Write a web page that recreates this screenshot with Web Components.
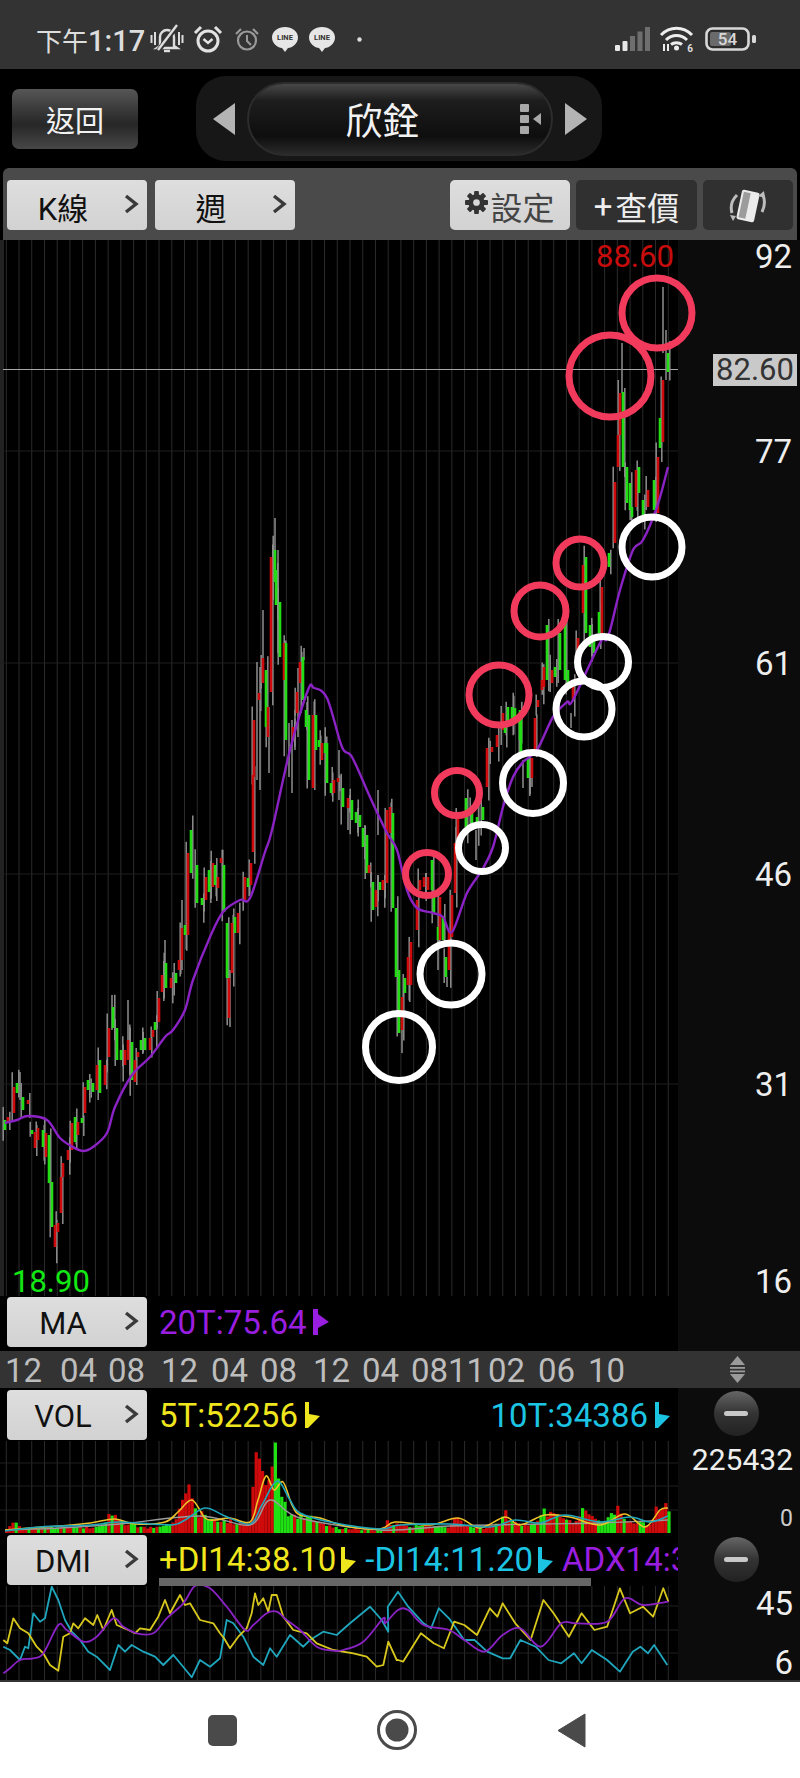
<!DOCTYPE html>
<html lang="zh-Hant">
<head>
<meta charset="utf-8">
<title>欣銓</title>
<style>
  html, body { margin: 0; background: #000; }
  body { width: 800px; height: 1778px; overflow: hidden; font-family: Roboto, "Noto Sans CJK TC", sans-serif; }
</style>
</head>
<body>
<phone-status></phone-status>
<stock-header name="欣銓"></stock-header>
<chart-toolbar></chart-toolbar>
<kline-chart></kline-chart>
<ma-row></ma-row>
<date-axis></date-axis>
<vol-panel></vol-panel>
<dmi-panel></dmi-panel>
<phone-nav></phone-nav>

<script>
// Helpers for chart drawing
const FONT = 'Roboto, "Noto Sans CJK TC", sans-serif';
const GRID_STEP = 12.73;
const GRID_START = 6.3;

// Small seeded random, so the picture is the same every time
function makeRandom(seed) {
  let s = seed;
  return () => {
    s = (s * 16807) % 2147483647;
    return (s % 1000) / 1000;
  };
}

// Parse "x,y x,y" traced from a zoom crop into page coordinates
function traced(str, ox, oy, sx, sy) {
  return str.trim().split(/\s+/).map(p => {
    const [x, y] = p.split(",").map(Number);
    return [ox + x / sx, oy + y / sy];
  });
}

// Catmull-Rom curve through the points, for the soft MA and volume lines
function linePath(points) {
  let d = `M${points[0][0].toFixed(1)} ${points[0][1].toFixed(1)}`;
  for (let i = 0; i < points.length - 1; i++) {
    const p0 = points[i - 1] || points[i];
    const p1 = points[i];
    const p2 = points[i + 1];
    const p3 = points[i + 2] || p2;
    const c1x = p1[0] + (p2[0] - p0[0]) / 6, c1y = p1[1] + (p2[1] - p0[1]) / 6;
    const c2x = p2[0] - (p3[0] - p1[0]) / 6, c2y = p2[1] - (p3[1] - p1[1]) / 6;
    d += `C${c1x.toFixed(1)} ${c1y.toFixed(1)} ${c2x.toFixed(1)} ${c2y.toFixed(1)} ${p2[0].toFixed(1)} ${p2[1].toFixed(1)}`;
  }
  return d;
}

// Straight segments, the DMI lines are jagged
function jaggedPath(points) {
  return points.map((p, i) => (i ? "L" : "M") + p[0].toFixed(1) + " " + p[1].toFixed(1)).join("");
}

function gridLines(x2, y1, y2, rows) {
  let out = "";
  for (let x = GRID_START; x < x2; x += GRID_STEP) {
    out += `<line x1="${x}" x2="${x}" y1="${y1}" y2="${y2}" stroke="#2b2b2b"/>`;
  }
  rows.forEach(y => {
    out += `<line x1="0" x2="${x2}" y1="${y}" y2="${y}" stroke="#1e1e1e"/>`;
  });
  return out;
}

// Candle bodies: x top bottom colour
const BODIES = `5 1120 1130 g|8 1117 1123 r|14 1087 1113 r|17 1083 1093 g|23 1097 1110 g|28 1100 1104 r|32 1130 1134 g|35 1132 1148 r|38 1128 1140 r|43 1130 1147 g|46 1133 1157 r|49 1135 1183 g|52 1182 1227 g|55 1225 1247 r|58 1223 1232 r|61 1177 1213 r|63 1163 1177 r|68 1150 1160 r|72 1123 1150 r|75 1117 1142 g|78 1122 1135 r|82 1118 1123 g|85 1087 1113 r|88 1080 1090 g|93 1083 1092 g|97 1065 1090 r|100 1060 1093 g|105 1065 1085 r|109 1028 1057 r|113 1007 1028 g|117 1028 1060 g|121 1050 1060 g|125 1050 1065 r|128 1040 1060 r|132 1042 1080 g|135 1060 1082 r|138 1052 1057 r|141 1040 1050 g|145 1038 1050 g|150 1038 1050 r|153 1030 1037 r|155 1022 1030 g|159 998 1022 r|162 975 992 r|166 963 988 g|171 978 988 r|176 973 983 g|179 960 970 r|182 928 960 r|185 925 935 g|188 853 935 r|191 830 873 g|197 865 903 g|202 898 905 g|206 877 900 r|209 870 892 g|213 863 887 r|215 865 885 g|218 877 888 r|221 858 863 r|224 865 912 g|227 923 978 g|229 978 1018 r|232 923 973 r|235 917 933 g|238 913 933 r|245 877 900 r|248 878 887 g|251 863 885 r|253 775 852 r|254 720 777 r|259 693 700 r|263 658 683 r|266 670 727 g|268 707 737 r|271 557 692 r|275 550 582 g|276 570 605 g|280 602 657 g|284 643 680 r|286 643 740 g|293 727 740 r|297 692 713 r|300 662 683 r|303 657 700 g|306 710 727 g|309 715 780 g|313 715 788 r|316 715 750 g|319 740 747 g|322 743 760 r|325 743 753 g|327 743 783 g|331 783 793 g|334 780 793 r|338 778 782 r|343 788 807 g|348 798 808 r|352 800 820 g|356 812 823 g|360 815 827 g|363 828 847 g|367 835 873 g|369 865 873 r|373 882 910 g|376 890 907 r|380 882 890 g|383 880 890 r|387 810 883 r|390 807 833 r|393 813 908 g|396 908 977 g|399 970 1033 g|402 997 1030 r|405 978 993 g|408 957 985 r|411 942 985 r|417 900 930 r|420 880 890 r|424 877 887 r|428 877 890 r|432 860 890 g|434 897 913 g|438 927 940 g|440 897 940 r|443 917 940 g|446 957 977 g|449 930 970 r|452 895 937 r|455 843 893 r|458 818 840 r|466 798 827 g|472 813 823 g|477 817 828 g|483 807 820 g|487 748 787 r|492 747 752 r|497 735 747 r|503 713 730 r|505 723 733 g|508 707 723 g|512 707 720 g|515 708 720 g|520 710 740 g|521 717 753 g|528 758 778 g|532 758 778 r|535 718 750 r|538 700 707 r|542 680 690 r|544 667 687 r|547 625 680 g|552 670 683 r|555 667 677 g|560 633 670 g|565 617 680 g|568 670 687 g|573 687 700 r|578 638 653 r|583 565 613 r|586 557 633 g|590 625 647 g|594 637 653 g|599 612 633 g|602 587 633 r|609 553 567 g|615 482 543 r|618 435 467 r|620 393 435 r|623 392 467 g|627 467 503 g|630 483 510 g|632 507 517 g|636 470 507 r|639 467 493 g|643 500 517 g|648 490 507 r|654 480 510 g|658 457 513 r|660 418 448 g|663 380 442 r|668 353 372 g`;

// Long wicks that stand out: x top bottom
const WICKS = `622 343 393|663 287 353|666 330 380|275 518 550|263 610 670|260 667 790|257 662 780|269 707 773|278 550 653|289 723 777|292 720 793|295 710 750|298 668 737|304 648 660|307 702 730|402 1030 1053|447 977 987|438 927 970|456 827 893|476 830 860|523 760 788|532 760 787|571 713 728|230 970 1027|339 750 800|165 940 985|128 1000 1050|112 995 1030|20 1072 1100|348 808 830|378 790 835|182 900 970`;

const MA_LINE = traced(`5,1123 17,1120 28,1116 47,1120 60,1138 73,1147 83,1151 93,1147 107,1133 115,1107 132,1075 150,1057 165,1037 173,1030 185,1010 193,980 210,937 223,912 240,900 250,898 265,852 272,830 290,750 308,690 314,688 327,698 342,747 352,757 370,797 387,833 397,850 407,890 417,908 433,913 443,917 452,932 467,893 482,870 493,847 503,807 513,777 523,762 537,750 553,717 567,702 573,700 600,643 608,637 620,590 633,550 643,540 657,507 668,467`, 0, 0, 1, 1);

// ----- Small arrow flag that follows each indicator value -----
class TrendFlag extends HTMLElement {
  connectedCallback() {
    const color = this.getAttribute("color");
    const up = this.hasAttribute("up");
    const shape = up
      ? "M0 0 L5 0 L5 5 L16 13 L5 19 L5 26 L0 26Z"
      : "M0 0 L4 0 L4 12 L15 14 L3 26 L0 26Z";
    this.attachShadow({ mode: "open" });
    this.shadowRoot.innerHTML = `
      <style>
        :host { display: inline-block; width: 16px; height: 26px; flex: none; }
        svg { display: block; }
      </style>
      <svg width="16" height="26" viewBox="0 0 16 26"><path d="${shape}" fill="${color}"/></svg>
    `;
  }
}
customElements.define("trend-flag", TrendFlag);

// ----- Light grey button with chevron -----
class MenuButton extends HTMLElement {
  constructor() {
    super();
    this.attachShadow({ mode: "open" });
    this.shadowRoot.innerHTML = `
      <style>
        :host {
          display: flex;
          position: relative;
          align-items: center;
          justify-content: center;
          box-sizing: border-box;
          width: 140px;
          height: 50px;
          padding: 3px 28px 0 0;
          border-radius: 4px;
          background: linear-gradient(#dedede, #d2d2d2);
          color: #111;
          font: 400 31px ${FONT};
          flex: none;
        }
        svg { position: absolute; right: 8px; top: 14px; }
      </style>
      <slot></slot>
      <svg width="15" height="20" viewBox="0 0 15 20"><path d="M2 2 L12 10 L2 18" fill="none" stroke="#3a3a3a" stroke-width="3.4"/></svg>
    `;
  }
}
customElements.define("menu-button", MenuButton);

// ----- Round minus button on the right axis -----
class ZoomMinus extends HTMLElement {
  constructor() {
    super();
    this.attachShadow({ mode: "open" });
    this.shadowRoot.innerHTML = `
      <style>
        :host {
          display: flex;
          align-items: center;
          justify-content: center;
          width: 45px;
          height: 45px;
          margin-right: 6px;
          border-radius: 50%;
          background: linear-gradient(#666, #333 50%, #222);
          flex: none;
        }
        i { width: 24px; height: 5px; border-radius: 3px; background: #c8c8c8; }
      </style>
      <i></i>
    `;
  }
}
customElements.define("zoom-minus", ZoomMinus);

// ----- Android status bar -----
class PhoneStatus extends HTMLElement {
  constructor() {
    super();
    this.attachShadow({ mode: "open" });
    this.shadowRoot.innerHTML = `
      <style>
        :host {
          display: flex;
          align-items: center;
          justify-content: space-between;
          box-sizing: border-box;
          height: 69px;
          padding: 9px 44px 0 36px;
          background: #333;
          color: #ddd;
          font-family: ${FONT};
        }
        .side { display: flex; align-items: center; }
        .time { font-size: 26px; width: 107px; white-space: nowrap; }
        .time b { font-size: 29px; font-weight: 500; }
        svg { display: block; flex: none; }
      </style>
      <div class="side">
        <span class="time">下午<b>1:17</b></span>
        <svg width="34" height="30" viewBox="0 0 34 30" style="margin-left:7px" fill="none" stroke="#ddd">
          <path d="M10 22V13a7 7 0 0 1 14 0v9l3 2H7z" stroke-width="2.4"/>
          <path d="M14 27h6" stroke-width="2.4"/>
          <path d="M1.5 11v8M5 8v13M29 8v13M32.5 11v8" stroke-width="2"/>
          <path d="M8 27L27 2" stroke="#333" stroke-width="5"/>
          <path d="M8 26L27 1" stroke-width="2.4"/>
        </svg>
        <svg width="30" height="28" viewBox="0 0 30 28" style="margin-left:9px" fill="none" stroke="#e2e2e2">
          <circle cx="15" cy="16" r="10" stroke-width="3"/>
          <path d="M10.5 14l4.5 4 4.5-4" stroke-width="2.4"/>
          <path d="M2 8l6-6M28 8l-6-6" stroke-width="3"/>
        </svg>
        <svg width="26" height="24" viewBox="0 0 26 24" style="margin-left:11px" fill="none" stroke="#9a9a9a">
          <circle cx="13" cy="13.5" r="9" stroke-width="2.2"/>
          <path d="M13 8v6l4 4" stroke-width="2"/>
          <path d="M2 7l5-5M24 7l-5-5" stroke-width="2.2"/>
        </svg>
        <svg width="26" height="25" viewBox="0 0 26 25" style="margin-left:12px">
          <path d="M13 0C20 0 26 4.5 26 10.5S20 21 16 21L13 25 10 21C6 21 0 16.5 0 10.5S6 0 13 0Z" fill="#e6e6e6"/>
          <text x="13" y="13" font-size="7.5" font-weight="700" font-family="Roboto" text-anchor="middle" fill="#333">LINE</text>
        </svg>
        <svg width="26" height="25" viewBox="0 0 26 25" style="margin-left:11px">
          <path d="M13 0C20 0 26 4.5 26 10.5S20 21 16 21L13 25 10 21C6 21 0 16.5 0 10.5S6 0 13 0Z" fill="#e6e6e6"/>
          <text x="13" y="13" font-size="7.5" font-weight="700" font-family="Roboto" text-anchor="middle" fill="#333">LINE</text>
        </svg>
        <svg width="5" height="5" viewBox="0 0 5 5" style="margin-left:22px"><circle cx="2.5" cy="2.5" r="2.2" fill="#ddd"/></svg>
      </div>
      <div class="side">
        <svg width="35" height="24" viewBox="0 0 35 24">
          <rect x="0" y="18" width="5" height="6" rx="1" fill="#e8e8e8"/>
          <rect x="7.5" y="14" width="5" height="10" rx="1" fill="#e8e8e8"/>
          <rect x="15" y="9" width="5" height="15" fill="#6e6e6e"/>
          <rect x="22.5" y="4.5" width="5" height="19.5" fill="#6e6e6e"/>
          <rect x="30" y="0" width="5" height="24" fill="#6e6e6e"/>
        </svg>
        <svg width="35" height="26" viewBox="0 0 35 26" style="margin-left:9px" fill="none" stroke="#eee" stroke-width="3">
          <path d="M2 9C11 0 24 0 33 9"/>
          <path d="M7 14C13 8 22 8 28 14"/>
          <path d="M12 18.5C15 16 20 16 23 18.5"/>
          <circle cx="17.5" cy="22" r="2.5" fill="#eee" stroke="none"/>
          <path d="M5 18v7M9 18v7" stroke-width="2"/>
          <text x="31" y="25.5" font-size="10" font-family="Roboto" font-weight="700" fill="#ddd" stroke="none" text-anchor="middle">6</text>
        </svg>
        <svg width="51" height="24" viewBox="0 0 51 24" style="margin-left:11px">
          <rect x="1.5" y="1.5" width="42" height="21" rx="6" fill="#2b2b2b" stroke="#d8d8d8" stroke-width="2.6"/>
          <rect x="5" y="5" width="21" height="14" rx="2" fill="#6a6a6a"/>
          <rect x="47" y="8" width="4" height="8" rx="1.5" fill="#d8d8d8"/>
          <text x="22.5" y="18" font-size="17" font-family="Roboto" font-weight="500" fill="#d8d8d8" text-anchor="middle">54</text>
        </svg>
      </div>
    `;
  }
}
customElements.define("phone-status", PhoneStatus);

// ----- Back button and stock stepper -----
class StockHeader extends HTMLElement {
  connectedCallback() {
    const name = this.getAttribute("name");
    this.attachShadow({ mode: "open" });
    this.shadowRoot.innerHTML = `
      <style>
        :host {
          display: flex;
          align-items: center;
          box-sizing: border-box;
          height: 99px;
          padding-left: 12px;
          background: #000;
          font-family: ${FONT};
          color: #f2f2f2;
        }
        .back {
          display: flex;
          align-items: center;
          justify-content: center;
          width: 126px;
          height: 60px;
          border-radius: 7px;
          background: linear-gradient(#565656, #2d2d2d 50%, #272727 60%, #474747);
          font-size: 29px;
        }
        .stepper {
          display: flex;
          align-items: center;
          box-sizing: border-box;
          width: 406px;
          height: 85px;
          margin-left: 58px;
          padding: 0 17px;
          gap: 12px;
          border-radius: 30px;
          background: #171717;
        }
        .pill {
          display: flex;
          align-items: center;
          box-sizing: border-box;
          width: 306px;
          height: 74px;
          border-radius: 37px;
          border: 2px solid #2c2c2c;
          background: linear-gradient(#484848, #1d1d1d 24%, #0e0e0e 75%, #2a2a2a);
          flex: none;
        }
        .name { width: 267px; text-align: center; font-size: 37px; }
        svg { display: block; flex: none; }
      </style>
      <div class="back">返回</div>
      <div class="stepper">
        <svg width="22" height="32" viewBox="0 0 22 32"><path d="M22 0V32L0 16Z" fill="#b4b4b4"/></svg>
        <div class="pill">
          <span class="name">${name}</span>
          <svg width="22" height="30" viewBox="0 0 22 30" style="margin-left:4px" fill="#a8a8a8">
            <rect x="0" y="0" width="9" height="8" rx="1"/>
            <rect x="0" y="11" width="9" height="8" rx="1"/>
            <rect x="0" y="22" width="9" height="8" rx="1"/>
            <path d="M21 9V21L13 15Z"/>
          </svg>
        </div>
        <svg width="22" height="32" viewBox="0 0 22 32"><path d="M0 0V32L22 16Z" fill="#b4b4b4"/></svg>
      </div>
    `;
  }
}
customElements.define("stock-header", StockHeader);

// ----- Grey toolbar with period and action buttons -----
class ChartToolbar extends HTMLElement {
  constructor() {
    super();
    this.attachShadow({ mode: "open" });
    this.shadowRoot.innerHTML = `
      <style>
        :host {
          display: flex;
          align-items: center;
          box-sizing: border-box;
          height: 72px;
          margin: 0 3px;
          padding: 2px 4px 0;
          gap: 6px;
          border-radius: 6px 6px 0 0;
          background: #4a4a4a;
          font-family: ${FONT};
        }
        menu-button + menu-button { margin-left: 2px; }
        .spacer { flex: 1; }
        .action {
          display: flex;
          align-items: center;
          justify-content: center;
          height: 50px;
          padding-top: 2px;
          box-sizing: border-box;
          border-radius: 5px;
          font-size: 32px;
          flex: none;
        }
        .light { width: 120px; background: linear-gradient(#dedede, #d2d2d2); color: #444; }
        .dark { width: 121px; background: #303030; color: #eee; }
        .turn { width: 90px; background: #303030; }
        .plus { font-size: 33px; margin-right: 3px; }
      </style>
      <menu-button>K線</menu-button>
      <menu-button>週</menu-button>
      <div class="spacer"></div>
      <div class="action light">
        <svg width="23" height="23" viewBox="0 0 24 24" style="margin-right:2px;margin-top:-8px">
          <g fill="#333">
            <rect x="9.5" y="0" width="5" height="24" rx="1"/>
            <rect x="9.5" y="0" width="5" height="24" rx="1" transform="rotate(45 12 12)"/>
            <rect x="9.5" y="0" width="5" height="24" rx="1" transform="rotate(90 12 12)"/>
            <rect x="9.5" y="0" width="5" height="24" rx="1" transform="rotate(135 12 12)"/>
            <circle cx="12" cy="12" r="8.5"/>
          </g>
          <circle cx="12" cy="12" r="3.5" fill="#d8d8d8"/>
        </svg>設定
      </div>
      <div class="action dark"><span class="plus">+</span>查價</div>
      <div class="action turn">
        <svg width="38" height="34" viewBox="0 0 38 34">
          <rect x="10" y="2" width="18" height="30" rx="2" fill="#ececec" transform="rotate(12 19 17)"/>
          <rect x="12" y="4" width="7" height="26" fill="#9c9c9c" transform="rotate(12 19 17)"/>
          <path d="M3 24C1 17 3 11 8 6" fill="none" stroke="#bdbdbd" stroke-width="3"/>
          <path d="M1 26l6 1-3 5z" fill="#bdbdbd"/>
          <path d="M34 6c2 5 2 11-1 17" fill="none" stroke="#bdbdbd" stroke-width="3"/>
          <path d="M29 7l6-5 1 7z" fill="#bdbdbd"/>
        </svg>
      </div>
    `;
  }
}
customElements.define("chart-toolbar", ChartToolbar);

// ----- Main candlestick chart with price axis and marker circles -----
class KlineChart extends HTMLElement {
  constructor() {
    super();
    this.attachShadow({ mode: "open" });

    const rand = makeRandom(4711);
    let wicks = "";
    let bodies = "";
    BODIES.split("|").forEach((row, i) => {
      const parts = row.split(" ");
      const x = +parts[0], top = +parts[1], bottom = +parts[2];
      const up = 2 + rand() * 14;
      const down = 2 + rand() * 16;
      const wx = x + (i % 2 ? 1.8 : -1.8);
      wicks += `<line x1="${wx}" x2="${wx}" y1="${top - up}" y2="${bottom + down}"/>`;
      const fill = parts[3] === "r" ? "#cf0a0a" : "#22dc14";
      bodies += `<rect x="${x - 1.3}" y="${top}" width="2.6" height="${bottom - top}" fill="${fill}"/>`;
    });
    WICKS.split("|").forEach(row => {
      const [x, top, bottom] = row.split(" ").map(Number);
      wicks += `<line x1="${x}" x2="${x}" y1="${top}" y2="${bottom}"/>`;
    });

    const rings = [
      [657, 313, 35, "r"], [610, 376, 41, "r"], [580, 563, 24, "r"], [540, 611, 26, "r"],
      [499, 695, 30, "r"], [457, 793, 22.5, "r"], [427, 874, 21.5, "r"],
      [652, 547, 30, "w"], [603, 662, 25.5, "w"], [584, 709, 28, "w"], [533, 783, 30.5, "w"],
      [482, 848, 23.5, "w"], [451, 974, 31, "w"], [399, 1047, 33.5, "w"]
    ].map(([cx, cy, r, c]) =>
      `<circle cx="${cx}" cy="${cy}" r="${r}" fill="none" stroke="${c === "r" ? "#f23a5c" : "#fff"}" stroke-width="7"/>`
    ).join("");

    const ticks = [["92", 256], ["77", 451], ["61", 663], ["46", 874], ["31", 1084], ["16", 1281]]
      .map(([t, y]) => `<span class="tick" style="top:${y - 240}px">${t}</span>`).join("");

    this.shadowRoot.innerHTML = `
      <style>
        :host {
          display: block;
          position: relative;
          height: 1056px;
          background: #0c0c0c;
          font-family: ${FONT};
        }
        .plot { display: block; position: absolute; left: 0; top: 0; filter: blur(0.35px); }
        .tick {
          position: absolute;
          right: 8px;
          transform: translateY(-50%);
          color: #eee;
          font-size: 33px;
          line-height: 1;
        }
        .high { position: absolute; left: 596px; top: 0; color: #c80c0c; font-size: 31px; line-height: 34px; }
        .low { position: absolute; left: 12px; top: 1025px; color: #14e814; font-size: 31px; line-height: 34px; }
        .last {
          position: absolute;
          left: 713px;
          top: 114px;
          width: 84px;
          height: 32px;
          background: #c9c9c9;
          color: #333;
          font-size: 31px;
          line-height: 32px;
          text-align: center;
        }
        .rings { position: absolute; left: 0; top: 0; }
      </style>
      <svg class="plot" width="678" height="1056" viewBox="0 240 678 1056">
        <rect x="0" y="240" width="678" height="1056" fill="#000"/>
        <rect x="0" y="240" width="4" height="1056" fill="#222"/>
        ${gridLines(678, 240, 1296, [451, 663, 874, 1084])}
        <line x1="3" x2="678" y1="369.5" y2="369.5" stroke="#a8a8a8"/>
        <g stroke="#8f8f8f" stroke-width="1.5">${wicks}</g>
        ${bodies}
        <path d="${linePath(MA_LINE)}" fill="none" stroke="#8a22c4" stroke-width="2.4"/>
      </svg>
      ${ticks}
      <span class="high">88.60</span>
      <span class="low">18.90</span>
      <span class="last">82.60</span>
      <svg class="rings" width="800" height="1056" viewBox="0 240 800 1056">${rings}</svg>
    `;
  }
}
customElements.define("kline-chart", KlineChart);

// ----- Moving average row -----
class MaRow extends HTMLElement {
  constructor() {
    super();
    this.attachShadow({ mode: "open" });
    this.shadowRoot.innerHTML = `
      <style>
        :host {
          display: flex;
          align-items: center;
          box-sizing: border-box;
          height: 55px;
          padding: 0 122px 3px 7px;
          background: linear-gradient(to right, #000 678px, #0c0c0c 678px);
          font-family: ${FONT};
        }
        .value { margin-left: 12px; color: #9a1ee0; font-size: 33px; white-space: nowrap; }
        trend-flag { margin-left: 6px; }
      </style>
      <menu-button>MA</menu-button>
      <span class="value">20T:75.64</span>
      <trend-flag color="#9a1ee0" up></trend-flag>
    `;
  }
}
customElements.define("ma-row", MaRow);

// ----- Date axis between the price chart and the indicators -----
class DateAxis extends HTMLElement {
  constructor() {
    super();
    this.attachShadow({ mode: "open" });
    const labels = [["12", 5], ["04", 60], ["08", 108], ["12", 161], ["04", 211], ["08", 260], ["12", 313],
      ["04", 362], ["08", 411], ["11", 448], ["02", 488], ["06", 538], ["10", 588]]
      .map(([t, x]) => `<span style="left:${x}px">${t}</span>`).join("");
    this.shadowRoot.innerHTML = `
      <style>
        :host {
          display: block;
          position: relative;
          height: 37px;
          background: #333;
          font-family: ${FONT};
        }
        span { position: absolute; top: 1px; color: #bdbdbd; font-size: 33px; line-height: 37px; }
        svg { position: absolute; left: 729px; top: 5px; }
      </style>
      ${labels}
      <svg width="17" height="27" viewBox="0 0 17 27" fill="#9a9a9a">
        <path d="M8.5 0L16 9H1Z"/>
        <rect x="1" y="11" width="15" height="1.8"/>
        <rect x="1" y="14.5" width="15" height="1.8"/>
        <path d="M8.5 27L16 18H1Z"/>
      </svg>
    `;
  }
}
customElements.define("date-axis", DateAxis);

// ----- Volume panel -----
class VolPanel extends HTMLElement {
  constructor() {
    super();
    this.attachShadow({ mode: "open" });

    // Height of the bars along the panel, traced from the reference
    const shape = [[5, 4], [13, 12], [20, 5], [60, 7], [100, 7], [108, 20], [114, 18], [120, 12], [150, 6], [165, 9], [175, 14], [178, 25], [182, 36], [188, 50], [193, 25], [200, 22], [210, 14], [230, 14], [245, 10], [250, 13], [253, 84], [258, 74], [262, 58], [270, 62], [274, 92], [278, 42], [284, 30], [290, 18], [300, 20], [310, 17], [320, 10], [335, 6], [380, 3], [386, 13], [400, 8], [449, 8], [454, 17], [465, 8], [480, 5], [500, 12], [503, 25], [510, 12], [530, 8], [543, 25], [561, 15], [575, 12], [582, 27], [600, 10], [617, 28], [625, 12], [638, 12], [650, 8], [656, 32], [663, 33], [668, 20]];
    const heightAt = x => {
      for (let i = 1; i < shape.length; i++) {
        if (x <= shape[i][0]) {
          const [x0, h0] = shape[i - 1];
          const [x1, h1] = shape[i];
          return h0 + (h1 - h0) * (x - x0) / (x1 - x0);
        }
      }
      return 4;
    };
    const rand = makeRandom(2024);
    let bars = "";
    for (let x = 5; x < 669; x += 3.2) {
      const spike = shape.some(s => Math.abs(s[0] - x) < 1.7);
      const h = heightAt(x) * (spike ? 1 : 0.65 + rand() * 0.35);
      let green = rand() > 0.62;
      if (x > 174 && x < 191) green = false;
      if (x > 248 && x < 271) green = false;
      if (x > 271 && x < 277) green = true;
      bars += `<rect x="${x.toFixed(1)}" y="${(1533 - h).toFixed(1)}" width="3.2" height="${h.toFixed(1)}" fill="${green ? "#1fe012" : "#cf0a0a"}"/>`;
    }

    const yellow = traced(`5,1530 30,1528 60,1526 90,1523 115,1519 135,1524 165,1522 178,1512 192,1500 205,1518 215,1520 230,1518 250,1522 258,1500 266,1476 274,1490 283,1482 292,1505 300,1515 320,1518 345,1526 380,1529 395,1522 430,1525 458,1518 480,1528 505,1517 520,1525 545,1515 570,1517 600,1525 625,1514 645,1527 660,1510 668,1508`, 0, 0, 1, 1);
    const teal = traced(`5,1531 40,1527 90,1525 120,1522 170,1525 185,1520 205,1508 225,1516 250,1524 262,1505 277,1481 290,1500 300,1513 330,1522 380,1529 400,1525 450,1524 490,1527 515,1520 540,1523 565,1515 600,1522 630,1517 650,1522 668,1516`, 0, 0, 1, 1);
    const grey = traced(`5,1530 60,1528 120,1524 200,1516 250,1525 270,1500 300,1518 380,1530 450,1526 540,1524 600,1523 668,1520`, 0, 0, 1, 1);

    this.shadowRoot.innerHTML = `
      <style>
        :host {
          display: grid;
          grid-template-columns: 678px 122px;
          height: 145px;
          background: #000;
          font-family: ${FONT};
        }
        .main { display: flex; flex-direction: column; }
        .row { display: flex; align-items: center; height: 53px; padding-left: 7px; box-sizing: border-box; padding-top: 1px; flex: none; }
        .a { margin-left: 12px; color: #f0e61e; font-size: 33px; }
        .b { margin-left: auto; color: #1cc4e4; font-size: 33px; }
        .flag { margin-left: 7px; margin-right: 7px; }
        svg { display: block; filter: blur(0.35px); }
        .side {
          background: #0c0c0c;
          display: flex;
          flex-direction: column;
          align-items: center;
          color: #eee;
          position: relative;
        }
        zoom-minus { margin-top: 3px; }
        .max { margin-top: 6px; font-size: 30px; line-height: 36px; width: 100%; text-align: right; padding-right: 7px; box-sizing: border-box; }
        .zero { margin-top: 29px; font-size: 23px; line-height: 24px; color: #ccc; width: 100%; text-align: right; padding-right: 7px; box-sizing: border-box; }
      </style>
      <div class="main">
        <div class="row">
          <menu-button>VOL</menu-button>
          <span class="a">5T:52256</span>
          <trend-flag class="flag" color="#f0e61e"></trend-flag>
          <span class="b">10T:34386</span>
          <trend-flag class="flag" color="#1cc4e4"></trend-flag>
        </div>
        <svg width="678" height="92" viewBox="0 1441 678 92">
          ${gridLines(678, 1441, 1533, [1463, 1486, 1510])}
          ${bars}
          <path d="${linePath(grey)}" fill="none" stroke="#9a9a9a" stroke-width="1.4"/>
          <path d="${linePath(yellow)}" fill="none" stroke="#eec22a" stroke-width="1.6"/>
          <path d="${linePath(teal)}" fill="none" stroke="#1fa6bd" stroke-width="1.6"/>
        </svg>
      </div>
      <div class="side">
        <zoom-minus></zoom-minus>
        <span class="max">225432</span>
        <span class="zero">0</span>
      </div>
    `;
  }
}
customElements.define("vol-panel", VolPanel);

// ----- DMI panel -----
class DmiPanel extends HTMLElement {
  constructor() {
    super();
    this.attachShadow({ mode: "open" });

    const teal = traced(`10,620 30,630 60,660 75,620 85,625 100,520 120,545 135,535 155,440 175,480 195,540 215,575 240,600 265,635 290,650 330,690 355,615 375,635 395,615 430,635 465,650 490,675 520,645 545,675 575,712 600,660 630,680 660,655 680,540 700,550 730,590 760,650 790,675 810,625 830,650 870,585 910,620 930,600 970,575 1010,585 1050,550 1110,500 1145,540 1165,575`, 0, 1440, 3, 3)
      .concat(traced(`760,320 780,275 800,320 830,370 845,385 860,325 880,355 910,420 930,420 955,455 985,475 1000,475 1020,420 1050,440 1075,480 1100,490 1125,460 1140,490 1160,450 1190,480 1215,515 1240,455 1255,440 1270,460 1282,435 1308,495`, 0, 1500, 1.96, 3));
    const yellow = traced(`10,600 22,610 40,535 60,565 85,580 110,620 130,640 150,675 175,692 190,590 210,580 220,550 235,565 255,535 280,555 292,525 310,570 335,510 350,555 385,570 405,580 420,565 450,570 475,530 495,480 510,520 540,465 555,495 570,490 600,540 640,550 660,580 672,595 690,625 715,590 740,565 755,520 765,460 775,495 790,475 805,515 815,465 830,465 850,530 880,570 920,580 950,610 1000,630 1060,640 1100,650 1130,680 1150,675 1165,605 1190,660`, 0, 1440, 3, 3)
      .concat(traced(`780,480 790,485 825,400 850,430 870,445 890,365 910,375 935,405 960,325 975,350 985,310 1010,370 1040,420 1065,300 1085,340 1115,410 1140,340 1165,390 1190,380 1215,265 1235,340 1260,320 1280,350 1300,265 1310,305`, 0, 1500, 1.96, 3));
    const purple = traced(`10,700 30,685 60,660 100,655 130,640 175,555 200,570 250,605 290,590 340,535 370,560 410,580 460,580 500,535 550,490 585,438 630,445 680,500 735,570 760,555 800,520 830,515 860,540 900,570 950,620 1000,632 1030,630 1090,605 1150,535`, 0, 1440, 3, 3)
      .concat(traced(`755,370 780,330 800,330 830,375 880,390 910,420 950,455 985,405 1020,385 1060,440 1100,370 1130,370 1190,365 1225,295 1260,315 1310,305`, 0, 1500, 1.96, 3));

    this.shadowRoot.innerHTML = `
      <style>
        :host {
          display: grid;
          grid-template-columns: 678px 122px;
          grid-template-rows: 147px 2px;
          height: 149px;
          background: #000;
          font-family: ${FONT};
        }
        .main { display: flex; flex-direction: column; min-width: 0; }
        .row { display: flex; align-items: center; height: 53px; padding-left: 7px; box-sizing: border-box; flex: none; overflow: hidden; position: relative; }
        span { font-size: 33px; white-space: nowrap; flex: none; }
        .p { margin-left: 12px; color: #f0e61e; }
        .m { margin-left: 6px; color: #1cc4e4; }
        .x { margin-left: 6px; color: #9a1ee0; }
        trend-flag { margin-left: 5px; margin-right: 2px; }
        .thumb { position: absolute; left: 159px; top: 45px; width: 432px; height: 8px; background: #666; }
        svg { display: block; filter: blur(0.35px); }
        .side {
          background: #0c0c0c;
          color: #eee;
          display: flex;
          flex-direction: column;
          align-items: center;
        }
        zoom-minus { margin-top: 4px; }
        .big { width: 100%; box-sizing: border-box; text-align: right; padding-right: 7px; line-height: 38px; }
        .n45 { margin-top: 3px; }
        .n6 { margin-top: 21px; }
        .base { grid-column: 1 / 3; background: #333; }
      </style>
      <div class="main">
        <div class="row">
          <menu-button>DMI</menu-button>
          <span class="p">+DI14:38.10</span>
          <trend-flag color="#f0e61e"></trend-flag>
          <span class="m">-DI14:11.20</span>
          <trend-flag color="#1cc4e4"></trend-flag>
          <span class="x">ADX14:3</span>
          <div class="thumb"></div>
        </div>
        <svg width="678" height="94" viewBox="0 1586 678 94">
          ${gridLines(678, 1586, 1680, [1606, 1630, 1653])}
          <path d="${jaggedPath(teal)}" fill="none" stroke="#1fa6bd" stroke-width="1.8" stroke-linejoin="round"/>
          <path d="${jaggedPath(yellow)}" fill="none" stroke="#d8c81e" stroke-width="1.8" stroke-linejoin="round"/>
          <path d="${linePath(purple)}" fill="none" stroke="#8a22c4" stroke-width="1.8"/>
        </svg>
      </div>
      <div class="side">
        <zoom-minus></zoom-minus>
        <span class="big n45">45</span>
        <span class="big n6">6</span>
      </div>
      <div class="base"></div>
    `;
  }
}
customElements.define("dmi-panel", DmiPanel);

// ----- White Android navigation bar -----
class PhoneNav extends HTMLElement {
  constructor() {
    super();
    this.attachShadow({ mode: "open" });
    this.shadowRoot.innerHTML = `
      <style>
        :host {
          display: flex;
          align-items: center;
          box-sizing: border-box;
          height: 96px;
          padding: 0 0 0 208px;
          background: #fff;
        }
        svg { display: block; flex: none; }
      </style>
      <svg width="29" height="31" viewBox="0 0 29 31"><rect width="29" height="31" rx="5" fill="#4a4a4a"/></svg>
      <svg width="42" height="42" viewBox="0 0 42 42" style="margin-left:139px">
        <circle cx="21" cy="21" r="18.5" fill="none" stroke="#4a4a4a" stroke-width="3"/>
        <circle cx="21" cy="21" r="11.5" fill="#4a4a4a"/>
      </svg>
      <svg width="29" height="35" viewBox="0 0 29 35" style="margin-left:139px"><path d="M28 1V34L1 17.5Z" fill="#4a4a4a" stroke="#4a4a4a" stroke-linejoin="round"/></svg>
    `;
  }
}
customElements.define("phone-nav", PhoneNav);
</script>
</body>
</html>
